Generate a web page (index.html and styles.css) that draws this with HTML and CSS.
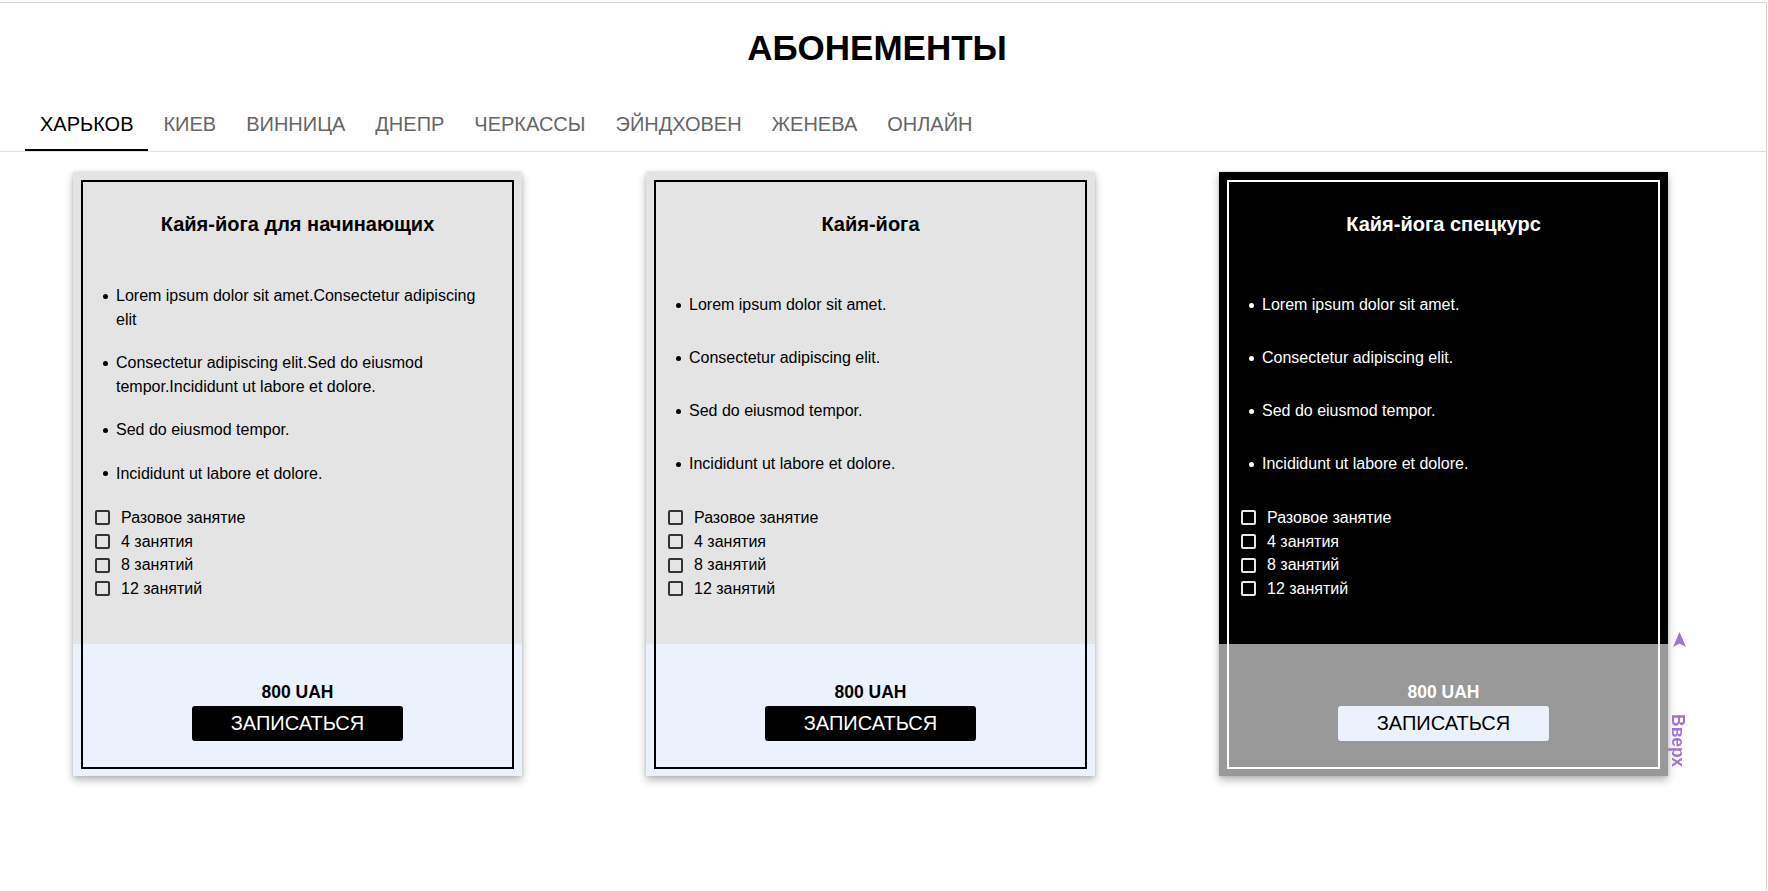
FILE: index.html
```html
<!DOCTYPE html>
<html lang="ru">
<head>
<meta charset="utf-8">
<title>Абонементы</title>
<link rel="stylesheet" href="styles.css">
</head>
<body>
<div class="page">
  <h1 class="title">АБОНЕМЕНТЫ</h1>
  <nav class="tabs">
    <a class="tab active">ХАРЬКОВ</a>
    <a class="tab">КИЕВ</a>
    <a class="tab">ВИННИЦА</a>
    <a class="tab">ДНЕПР</a>
    <a class="tab">ЧЕРКАССЫ</a>
    <a class="tab">ЭЙНДХОВЕН</a>
    <a class="tab">ЖЕНЕВА</a>
    <a class="tab">ОНЛАЙН</a>
  </nav>

  <section class="cards">
    <article class="card">
      <div class="card-top">
        <h2 class="card-title">Кайя-йога для начинающих</h2>
        <ul class="features">
          <li>Lorem ipsum dolor sit amet.Consectetur adipiscing elit</li>
          <li>Consectetur adipiscing elit.Sed do eiusmod tempor.Incididunt ut labore et dolore.</li>
          <li>Sed do eiusmod tempor.</li>
          <li>Incididunt ut labore et dolore.</li>
        </ul>
        <div class="options">
          <label class="option"><input type="checkbox"><span>Разовое занятие</span></label>
          <label class="option"><input type="checkbox"><span>4 занятия</span></label>
          <label class="option"><input type="checkbox"><span>8 занятий</span></label>
          <label class="option"><input type="checkbox"><span>12 занятий</span></label>
        </div>
      </div>
      <div class="card-bottom">
        <div class="price">800 UAH</div>
        <button class="btn" type="button">ЗАПИСАТЬСЯ</button>
      </div>
    </article>

    <article class="card">
      <div class="card-top">
        <h2 class="card-title">Кайя-йога</h2>
        <ul class="features">
          <li>Lorem ipsum dolor sit amet.</li>
          <li>Consectetur adipiscing elit.</li>
          <li>Sed do eiusmod tempor.</li>
          <li>Incididunt ut labore et dolore.</li>
        </ul>
        <div class="options">
          <label class="option"><input type="checkbox"><span>Разовое занятие</span></label>
          <label class="option"><input type="checkbox"><span>4 занятия</span></label>
          <label class="option"><input type="checkbox"><span>8 занятий</span></label>
          <label class="option"><input type="checkbox"><span>12 занятий</span></label>
        </div>
      </div>
      <div class="card-bottom">
        <div class="price">800 UAH</div>
        <button class="btn" type="button">ЗАПИСАТЬСЯ</button>
      </div>
    </article>

    <article class="card card-dark">
      <div class="card-top">
        <h2 class="card-title">Кайя-йога спецкурс</h2>
        <ul class="features">
          <li>Lorem ipsum dolor sit amet.</li>
          <li>Consectetur adipiscing elit.</li>
          <li>Sed do eiusmod tempor.</li>
          <li>Incididunt ut labore et dolore.</li>
        </ul>
        <div class="options">
          <label class="option"><input type="checkbox"><span>Разовое занятие</span></label>
          <label class="option"><input type="checkbox"><span>4 занятия</span></label>
          <label class="option"><input type="checkbox"><span>8 занятий</span></label>
          <label class="option"><input type="checkbox"><span>12 занятий</span></label>
        </div>
      </div>
      <div class="card-bottom">
        <div class="price">800 UAH</div>
        <button class="btn" type="button">ЗАПИСАТЬСЯ</button>
      </div>
    </article>
  </section>

  <a class="to-top" href="#">
    <svg class="to-top-arrow" width="13" height="15" viewBox="0 0 13 15" aria-hidden="true">
      <path d="M6.5 0 L13 15 L6.5 11.5 L0 15 Z" fill="currentColor"/>
    </svg>
    <span class="to-top-label">Вверх</span>
  </a>
</div>
</body>
</html>
```

FILE: styles.css
```css
html, body {
  margin: 0;
  padding: 0;
  background: #fff;
}

body {
  font-family: "Liberation Sans", Arial, sans-serif;
  color: #000;
}

.page {
  margin: 2px 1px 0 0;
  border-top: 1px solid #d4d4d4;
  border-right: 1px solid #d4d4d4;
  min-height: 888px;
  box-sizing: border-box;
}

.title {
  margin: 24px 0 32px;
  font-size: 35px;
  line-height: 42px;
  font-weight: 700;
  text-align: center;
  padding-right: 12px;
}

.tabs {
  display: flex;
  padding-left: 25px;
  border-bottom: 1px solid #e2e2e2;
}

.tab {
  padding: 12px 15px 14px;
  font-size: 20px;
  line-height: 22px;
  color: #666;
  border-bottom: 2px solid transparent;
  cursor: pointer;
  text-decoration: none;
}

.tab.active {
  color: #000;
  border-bottom-color: #000;
}

.cards {
  display: flex;
  justify-content: space-around;
  align-items: flex-start;
  padding: 0 36px 0 11px;
  margin-top: 20px;
}

.card {
  position: relative;
  width: 449px;
  background: #e4e4e4;
  box-shadow: 0 4px 8px rgba(0, 0, 0, 0.28), 0 0 3px rgba(0, 0, 0, 0.12);
}

.card::after {
  content: "";
  position: absolute;
  inset: 8px 8px 7px;
  border: 2px solid #000;
  pointer-events: none;
}

.card-top {
  padding: 40px 35px 43px 22px;
  background: #e4e4e4;
}

.card-title {
  margin: 0 0 28px;
  font-size: 20px;
  line-height: 24px;
  font-weight: 700;
  text-align: center;
  padding-left: 13px;
}

.features {
  display: flex;
  flex-direction: column;
  justify-content: space-evenly;
  height: 241px;
  margin: 0 0 1px;
  padding: 0 0 0 21px;
  font-size: 16px;
  line-height: 23.5px;
  list-style: none;
}

.features li {
  position: relative;
}

.features li::before {
  content: "";
  position: absolute;
  left: -13px;
  top: 9.5px;
  width: 5px;
  height: 5px;
  border-radius: 50%;
  background: currentColor;
}

.options {
  display: flex;
  flex-direction: column;
}

.option {
  display: flex;
  align-items: center;
  gap: 11px;
  height: 23.7px;
  font-size: 16px;
  line-height: 20px;
}

.option input {
  appearance: none;
  -webkit-appearance: none;
  width: 15px;
  height: 15px;
  margin: 0;
  box-sizing: border-box;
  border: 2px solid #333;
  border-radius: 2px;
  background: transparent;
  flex: none;
}

.card-bottom {
  padding: 38px 20px 35px;
  background: #ebf2fb;
  display: flex;
  flex-direction: column;
  align-items: center;
  gap: 4px;
}

.price {
  font-size: 17.5px;
  line-height: 20px;
  font-weight: 700;
}

.btn {
  width: 211px;
  height: 35px;
  padding: 0;
  border: 0;
  border-radius: 3px;
  background: #000;
  color: #fff;
  font-family: "Liberation Sans", Arial, sans-serif;
  font-size: 20px;
  line-height: 35px;
  cursor: pointer;
}

/* dark variant */
.card-dark {
  background: #000;
  color: #fff;
}

.card-dark::after {
  border-color: #fff;
}

.card-dark .card-top {
  background: #000;
}

.card-dark .option input {
  border-color: #e8e8e8;
}

.card-dark .card-bottom {
  background: #999;
}

.card-dark .price {
  color: #fff;
}

.card-dark .btn {
  background: #ebf2fb;
  color: #000;
}

/* scroll-to-top */
.to-top {
  position: fixed;
  left: 1667px;
  top: 632px;
  width: 20px;
  display: flex;
  flex-direction: column;
  align-items: center;
  gap: 67px;
  color: #a072d6;
  text-decoration: none;
}

.to-top-arrow {
  display: block;
  margin-left: 4px;
}

.to-top-label {
  writing-mode: vertical-rl;
  font-size: 17.5px;
  font-weight: 700;
  line-height: 19px;
}
```
